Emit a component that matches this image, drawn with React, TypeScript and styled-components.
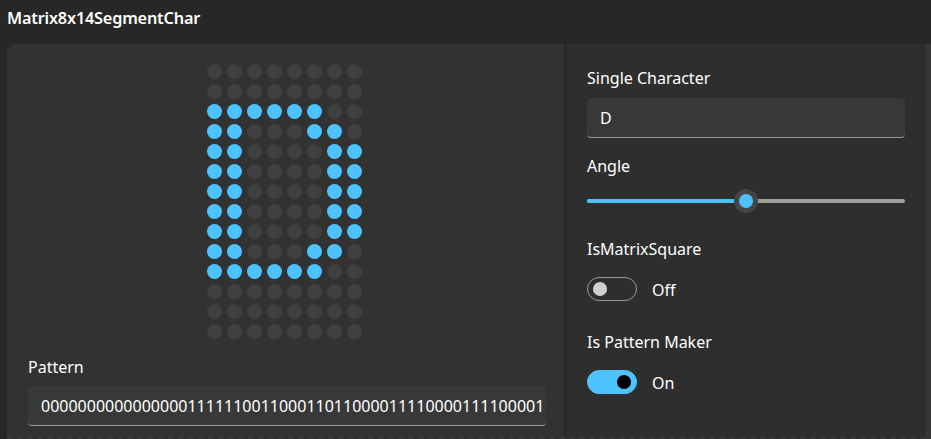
import React from "react";
import styled, { createGlobalStyle } from "styled-components";

const GlobalStyle = createGlobalStyle`
  html, body {
    margin: 0;
    padding: 0;
    background: #272727;
    overflow: hidden;
  }
  body {
    font-family: "Noto Sans", "Open Sans", "Liberation Sans", sans-serif;
    color: #ffffff;
  }
`;

const Page = styled.div`
  display: flex;
  flex-direction: column;
  height: 439px;
  width: 931px;
`;

const Header = styled.div`
  height: 44px;
  box-sizing: border-box;
  padding: 6px 7px 0;
  font-size: 16.3px;
  font-weight: 600;
  line-height: 24px;
  letter-spacing: -0.2px;
`;

const Body = styled.div`
  flex: 1;
  display: flex;
  min-height: 0;
`;

const Card = styled.div`
  flex: 1;
  display: flex;
  margin-left: 7px;
  border-top-left-radius: 8px;
  overflow: hidden;
  background: #2e2e2e;
  border-bottom: 2px dashed #3a3a3a;
`;

const ScrollStrip = styled.div`
  width: 5px;
  background: #363636;
`;

const LeftPanel = styled.div`
  width: 559px;
  box-sizing: border-box;
  padding: 20px 18px 0 21px;
  display: flex;
  flex-direction: column;
  background: #323232;
  border-right: 2px solid #262626;
`;

const RightPanel = styled.div`
  flex: 1;
  box-sizing: border-box;
  padding: 23px 21px 0 21px;
  display: flex;
  flex-direction: column;
`;

const DotGrid = styled.div`
  display: grid;
  grid-template-columns: repeat(8, 15px);
  grid-auto-rows: 15px;
  gap: 5px;
  margin: 0 auto;
  transform: translateX(-3px);
`;

const Dot = styled.div<{ $on: boolean }>`
  width: 15px;
  height: 15px;
  border-radius: 50%;
  background: ${(p) => (p.$on ? "#4cc2ff" : "#404040")};
`;

const Field = styled.div<{ $top: number; $gap: number }>`
  display: flex;
  flex-direction: column;
  gap: ${(p) => p.$gap}px;
  margin-top: ${(p) => p.$top}px;
`;

const Label = styled.div`
  font-size: 16px;
  line-height: 22px;
  color: #ffffff;
`;

const TextBox = styled.div`
  height: 40px;
  box-sizing: border-box;
  padding: 0 13px;
  display: flex;
  align-items: center;
  background: #383838;
  border-radius: 4px;
  border-bottom: 1px solid #9a9a9a;
  font-size: 16px;
  color: #ffffff;
  white-space: nowrap;
  overflow: hidden;
`;

const SliderWrap = styled.div`
  position: relative;
  height: 32px;
  display: flex;
  align-items: center;
`;

const Track = styled.div`
  flex: 1;
  height: 4px;
  border-radius: 2px;
  background: #9e9e9e;
  position: relative;
`;

const TrackFill = styled.div`
  position: absolute;
  left: 0;
  top: 0;
  bottom: 0;
  border-radius: 2px;
  background: #4cc2ff;
`;

const Thumb = styled.div`
  position: absolute;
  top: 50%;
  width: 24px;
  height: 24px;
  margin: -12px 0 0 -12px;
  border-radius: 50%;
  background: #454545;
  display: flex;
  align-items: center;
  justify-content: center;

  &::after {
    content: "";
    width: 14px;
    height: 14px;
    border-radius: 50%;
    background: #4cc2ff;
  }
`;

const ToggleRow = styled.div`
  display: flex;
  align-items: center;
  gap: 15px;
  height: 24px;
`;

const Switch = styled.div<{ $on: boolean }>`
  width: 50px;
  height: 24px;
  box-sizing: border-box;
  border-radius: 12px;
  display: flex;
  align-items: center;
  padding: 0 5px;
  justify-content: ${(p) => (p.$on ? "flex-end" : "flex-start")};
  background: ${(p) => (p.$on ? "#4cc2ff" : "transparent")};
  border: 1px solid ${(p) => (p.$on ? "#4cc2ff" : "#9a9a9a")};
`;

const Knob = styled.div<{ $on: boolean }>`
  width: 14px;
  height: 14px;
  border-radius: 50%;
  background: ${(p) => (p.$on ? "#000000" : "#cfcfcf")};
`;

const ToggleText = styled.span`
  font-size: 16px;
  line-height: 22px;
  margin-top: 2px;
`;

const rows = [
  "00000000",
  "00000000",
  "11111100",
  "11000110",
  "11000011",
  "11000011",
  "11000011",
  "11000011",
  "11000011",
  "11000110",
  "11111100",
  "00000000",
  "00000000",
  "00000000",
];

function Toggle({ on }: { on: boolean }) {
  return (
    <ToggleRow>
      <Switch $on={on}>
        <Knob $on={on} />
      </Switch>
      <ToggleText>{on ? "On" : "Off"}</ToggleText>
    </ToggleRow>
  );
}

export default function App() {
  const pattern = rows.join("");
  const angle = 0.5;

  return (
    <>
      <GlobalStyle />
      <Page>
        <Header>Matrix8x14SegmentChar</Header>
        <Body>
          <Card>
            <LeftPanel>
              <DotGrid>
                {rows.flatMap((row, r) =>
                  row.split("").map((c, i) => <Dot key={`${r}-${i}`} $on={c === "1"} />)
                )}
              </DotGrid>
              <Field $top={17} $gap={8}>
                <Label>Pattern</Label>
                <TextBox>{pattern}</TextBox>
              </Field>
            </LeftPanel>
            <RightPanel>
              <Field $top={0} $gap={9}>
                <Label>Single Character</Label>
                <TextBox>D</TextBox>
              </Field>
              <Field $top={17} $gap={8}>
                <Label>Angle</Label>
                <SliderWrap>
                  <Track>
                    <TrackFill style={{ width: `${angle * 100}%` }} />
                  </Track>
                  <Thumb style={{ left: `${angle * 100}%` }} />
                </SliderWrap>
              </Field>
              <Field $top={21} $gap={17}>
                <Label>IsMatrixSquare</Label>
                <Toggle on={false} />
              </Field>
              <Field $top={30} $gap={17}>
                <Label>Is Pattern Maker</Label>
                <Toggle on={true} />
              </Field>
            </RightPanel>
          </Card>
          <ScrollStrip />
        </Body>
      </Page>
    </>
  );
}
